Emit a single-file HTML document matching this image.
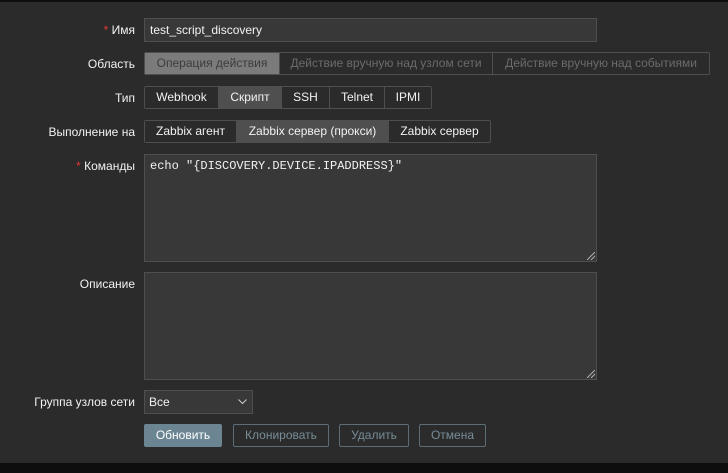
<!DOCTYPE html>
<html><head><meta charset="utf-8"><style>
*{box-sizing:border-box;margin:0;padding:0}
body{width:728px;height:473px;background:#2b2b2b;font-family:"Liberation Sans",Arial,sans-serif;font-size:12px;color:#f2f2f2;position:relative;overflow:hidden}
.top{position:absolute;left:0;top:0;width:728px;height:2px;background:#0e0e0e}
.bot{position:absolute;left:0;top:463px;width:728px;height:10px;background:#0e0e0e}
.lbl{position:absolute;right:593px;text-align:right;white-space:nowrap;line-height:14px}
.req{color:#e33734}
.in{position:absolute;background:#383838;border:1px solid #4f4f4f}
.seg{position:absolute;display:flex;border:1px solid #4f4f4f;border-radius:2px;height:23px}
.seg div{padding:0;white-space:nowrap;overflow:hidden;text-align:center;line-height:21px;border-right:1px solid #4f4f4f;background:#2b2b2b;color:#f2f2f2}
.seg div:last-child{border-right:none}
.seg .on{background:#4f4f4f}
.btn{position:absolute;top:424px;height:23px;line-height:21px;text-align:center;border:1px solid #5d6d78;color:#768d99;border-radius:2px}
.grip{position:absolute;right:1px;bottom:1px;width:8px;height:8px;background:linear-gradient(135deg,transparent 45%,#aaa 45%,#aaa 55%,transparent 55%,transparent 70%,#aaa 70%,#aaa 80%,transparent 80%)}
</style></head><body>
<div class="top"></div>
<div class="lbl" style="top:23px"><span class="req">*</span> Имя</div>
<div class="in" style="left:144px;top:18px;width:453px;height:24px;padding:3px 5px;line-height:16px">test_script_discovery</div>
<div class="lbl" style="top:57px">Область</div>
<div class="seg" style="left:144px;top:52px">
<div style="width:135px;background:#7b7b7b;color:#3c3c3c">Операция действия</div>
<div style="width:213px;color:#6b6b6b">Действие вручную над узлом сети</div>
<div style="width:216px;color:#6b6b6b">Действие вручную над событиями</div>
</div>
<div class="lbl" style="top:91px">Тип</div>
<div class="seg" style="left:144px;top:86px">
<div style="width:74px">Webhook</div>
<div class="on" style="width:63px">Скрипт</div>
<div style="width:48px">SSH</div>
<div style="width:55px">Telnet</div>
<div style="width:46px">IPMI</div>
</div>
<div class="lbl" style="top:125px">Выполнение на</div>
<div class="seg" style="left:144px;top:120px">
<div style="width:92px">Zabbix агент</div>
<div class="on" style="width:152px">Zabbix сервер (прокси)</div>
<div style="width:101px">Zabbix сервер</div>
</div>
<div class="lbl" style="top:159px"><span class="req">*</span> Команды</div>
<div class="in" style="left:144px;top:154px;width:453px;height:108px;padding:4px 5px;font-family:'Liberation Mono',monospace;font-size:12px;line-height:14px">echo "{DISCOVERY.DEVICE.IPADDRESS}"<div class="grip"></div></div>
<div class="lbl" style="top:277px">Описание</div>
<div class="in" style="left:144px;top:272px;width:453px;height:108px"><div class="grip"></div></div>
<div class="lbl" style="top:395px">Группа узлов сети</div>
<div class="in" style="left:144px;top:390px;width:109px;height:24px;padding:3px 4px;line-height:16px">Все<svg style="position:absolute;right:5px;top:8px" width="9" height="6"><path d="M0.5 0.5L4.5 4.5L8.5 0.5" stroke="#ccc" fill="none"/></svg></div>
<div class="btn" style="left:144px;width:78px;background:#6c8593;border-color:#6c8593;color:#fff">Обновить</div>
<div class="btn" style="left:233px;width:96px">Клонировать</div>
<div class="btn" style="left:339px;width:70px">Удалить</div>
<div class="btn" style="left:419px;width:67px">Отмена</div>
<div class="bot"></div>
</body></html>
